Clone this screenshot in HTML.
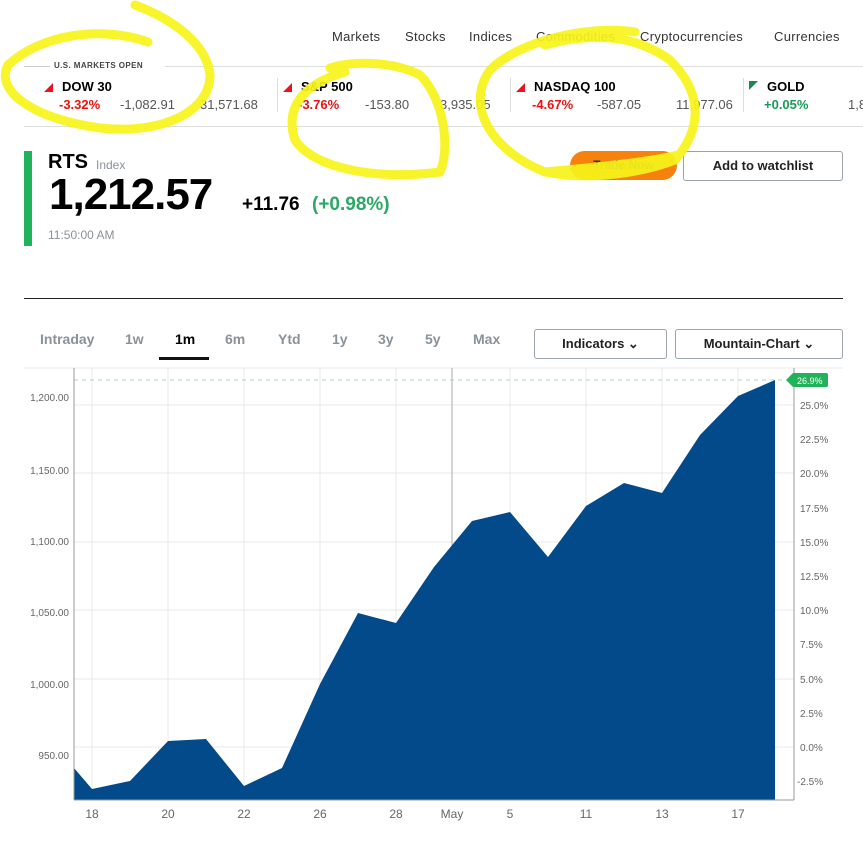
<!DOCTYPE html>
<html><head><meta charset="utf-8"><style>
*{margin:0;padding:0;box-sizing:border-box}
body{width:863px;height:846px;background:#fff;font-family:"Liberation Sans",Arial,sans-serif;position:relative;overflow:hidden;color:#000}
.a{position:absolute;white-space:nowrap}
.nav{top:29px;font-size:13px;color:#333;letter-spacing:.3px}
.tk{font-size:13px;font-weight:bold;color:#000}
.red{color:#e11;font-weight:bold;font-size:13px}
.g{color:#555;font-size:13px}
.tri{width:0;height:0;border-left:9px solid transparent;border-bottom:9px solid #e12}
.tab{top:331px;font-size:14px;color:#8a9299;font-weight:bold}
.btn{position:absolute;border:1px solid #9aa3aa;border-radius:3px;font-size:13px;font-weight:bold;color:#222;text-align:center;background:#fff}
</style></head><body>
<div class="a nav" style="left:332px">Markets</div>
<div class="a nav" style="left:405px">Stocks</div>
<div class="a nav" style="left:469px">Indices</div>
<div class="a nav" style="left:536px">Commodities</div>
<div class="a nav" style="left:640px">Cryptocurrencies</div>
<div class="a nav" style="left:774px">Currencies</div>

<div class="a" style="left:24px;top:66px;width:26px;border-top:1px solid #ccc"></div>
<div class="a" style="left:54px;top:61px;font-size:8px;font-weight:bold;color:#444;letter-spacing:.4px">U.S. MARKETS OPEN</div>
<div class="a" style="left:165px;top:66px;width:698px;border-top:1px solid #ddd"></div>
<div class="a" style="left:24px;top:126px;width:839px;border-top:1px solid #ddd"></div>

<div class="a tri" style="left:44px;top:83px"></div><div class="a tk" style="left:62px;top:79px">DOW 30</div>
<div class="a red" style="left:59px;top:97px">-3.32%</div><div class="a g" style="left:120px;top:97px">-1,082.91</div><div class="a g" style="left:200px;top:97px">31,571.68</div>
<div class="a" style="left:277px;top:78px;height:34px;border-left:1px solid #ddd"></div>
<div class="a tri" style="left:283px;top:83px"></div><div class="a tk" style="left:301px;top:79px">S&amp;P 500</div>
<div class="a red" style="left:298px;top:97px">-3.76%</div><div class="a g" style="left:365px;top:97px">-153.80</div><div class="a g" style="left:440px;top:97px">3,935.05</div>
<div class="a" style="left:510px;top:78px;height:34px;border-left:1px solid #ddd"></div>
<div class="a tri" style="left:516px;top:83px"></div><div class="a tk" style="left:534px;top:79px">NASDAQ 100</div>
<div class="a red" style="left:532px;top:97px">-4.67%</div><div class="a g" style="left:597px;top:97px">-587.05</div><div class="a g" style="left:676px;top:97px">11,977.06</div>
<div class="a" style="left:743px;top:78px;height:34px;border-left:1px solid #ddd"></div>
<div class="a" style="left:749px;top:81px;width:0;height:0;border-right:9px solid transparent;border-top:9px solid #198a4a"></div><div class="a tk" style="left:767px;top:79px">GOLD</div>
<div class="a" style="left:764px;top:97px;color:#1a9a55;font-weight:bold;font-size:13px">+0.05%</div><div class="a g" style="left:848px;top:97px">1,8</div>

<div class="a" style="left:24px;top:151px;width:8px;height:95px;background:#21b35a"></div>
<div class="a" style="left:48px;top:151px;font-size:20px;font-weight:bold">RTS</div>
<div class="a" style="left:96px;top:158px;font-size:12px;color:#8a9299">Index</div>
<div class="a" style="left:49px;top:170px;font-size:44px;font-weight:bold;letter-spacing:-1px">1,212.57</div>
<div class="a" style="left:242px;top:194px;font-size:19px;font-weight:bold">+11.76</div>
<div class="a" style="left:312px;top:194px;font-size:19px;font-weight:bold;color:#2aa865">(+0.98%)</div>
<div class="a" style="left:48px;top:228px;font-size:12px;color:#8a9299">11:50:00 AM</div>

<div class="a" style="left:570px;top:151px;width:107px;height:29px;border-radius:15px;background:#f6820d;font-size:12px;font-weight:bold;color:#333;text-align:center;line-height:29px">Trade Now</div>
<div class="btn" style="left:683px;top:151px;width:160px;height:30px;line-height:28px">Add to watchlist</div>

<div class="a" style="left:24px;top:298px;width:819px;border-top:1px solid #222"></div>

<div class="a tab" style="left:40px">Intraday</div>
<div class="a tab" style="left:125px">1w</div>
<div class="a tab" style="left:175px;color:#000">1m</div>
<div class="a" style="left:159px;top:357px;width:50px;height:3px;background:#111"></div>
<div class="a tab" style="left:225px">6m</div>
<div class="a tab" style="left:278px">Ytd</div>
<div class="a tab" style="left:332px">1y</div>
<div class="a tab" style="left:378px">3y</div>
<div class="a tab" style="left:425px">5y</div>
<div class="a tab" style="left:473px">Max</div>
<div class="btn" style="left:534px;top:329px;width:133px;height:30px;line-height:28px">Indicators ⌄</div>
<div class="btn" style="left:675px;top:329px;width:168px;height:30px;line-height:28px">Mountain-Chart ⌄</div>

<svg class="a" style="left:0;top:0" width="863" height="846">
<g stroke="#e8e8e8" stroke-width="1">
<line x1="24" y1="368" x2="843" y2="368"/>
<line x1="92" y1="368" x2="92" y2="800"/><line x1="168" y1="368" x2="168" y2="800"/><line x1="244" y1="368" x2="244" y2="800"/><line x1="320" y1="368" x2="320" y2="800"/><line x1="396" y1="368" x2="396" y2="800"/><line x1="510" y1="368" x2="510" y2="800"/><line x1="586" y1="368" x2="586" y2="800"/><line x1="662" y1="368" x2="662" y2="800"/><line x1="738" y1="368" x2="738" y2="800"/>
<line x1="74" y1="405" x2="794" y2="405"/><line x1="74" y1="473" x2="794" y2="473"/><line x1="74" y1="542" x2="794" y2="542"/><line x1="74" y1="610" x2="794" y2="610"/><line x1="74" y1="679" x2="794" y2="679"/><line x1="74" y1="747" x2="794" y2="747"/>
</g>
<line x1="452" y1="368" x2="452" y2="800" stroke="#aaa"/>
<line x1="74" y1="380" x2="782" y2="380" stroke="#9ddcc0" stroke-dasharray="4,4"/>
<path d="M74,768 L92,789 L130,781 L168,741 L206,739 L244,786 L282,768 L320,684 L358,613 L396,623 L434,567 L472,521 L510,512 L548,557 L586,506 L624,483 L662,493 L700,435 L738,396 L775,380 L775,800 L74,800Z" fill="#034a8a"/>
<line x1="74" y1="368" x2="74" y2="800" stroke="#999"/>
<line x1="74" y1="800" x2="794" y2="800" stroke="#999"/>
<line x1="794" y1="368" x2="794" y2="800" stroke="#999"/>
<path d="M786,380 L793,373 L826,373 Q828,373 828,375 L828,385 Q828,387 826,387 L793,387Z" fill="#21b35a"/>
<text x="797" y="384" font-size="9" fill="#fff" font-family="Liberation Sans">26.9%</text>
<g font-family="Liberation Sans" font-size="10" fill="#666" text-anchor="end">
<text x="69" y="401">1,200.00</text><text x="69" y="474">1,150.00</text><text x="69" y="545">1,100.00</text><text x="69" y="616">1,050.00</text><text x="69" y="688">1,000.00</text><text x="69" y="759">950.00</text>
</g>
<g font-family="Liberation Sans" font-size="10" fill="#666">
<text x="800" y="409">25.0%</text><text x="800" y="443">22.5%</text><text x="800" y="477">20.0%</text><text x="800" y="512">17.5%</text><text x="800" y="546">15.0%</text><text x="800" y="580">12.5%</text><text x="800" y="614">10.0%</text><text x="800" y="648">7.5%</text><text x="800" y="683">5.0%</text><text x="800" y="717">2.5%</text><text x="800" y="751">0.0%</text><text x="797" y="785">-2.5%</text>
</g>
<g font-family="Liberation Sans" font-size="12" fill="#666" text-anchor="middle">
<text x="92" y="818">18</text><text x="168" y="818">20</text><text x="244" y="818">22</text><text x="320" y="818">26</text><text x="396" y="818">28</text><text x="452" y="818">May</text><text x="510" y="818">5</text><text x="586" y="818">11</text><text x="662" y="818">13</text><text x="738" y="818">17</text>
</g>
<g fill="none" stroke="#f7f41a" stroke-width="9" stroke-linecap="round" opacity="0.92">
<path d="M148,42 C100,25 40,35 8,65 C-5,90 30,118 100,128 C165,135 210,110 210,75 C207,45 175,20 135,5"/>
<path d="M345,72 C300,85 285,110 295,140 C315,170 380,180 440,172 C450,150 445,100 420,75 C395,62 355,60 330,68"/>
<path d="M635,32 C590,25 520,40 490,70 C465,105 490,150 545,172 C595,182 650,170 675,160 C705,125 700,90 670,60 C640,38 600,30 545,45"/>
<path d="M545,172 C600,167 650,162 678,155"/>
</g>
</svg>
</body></html>
